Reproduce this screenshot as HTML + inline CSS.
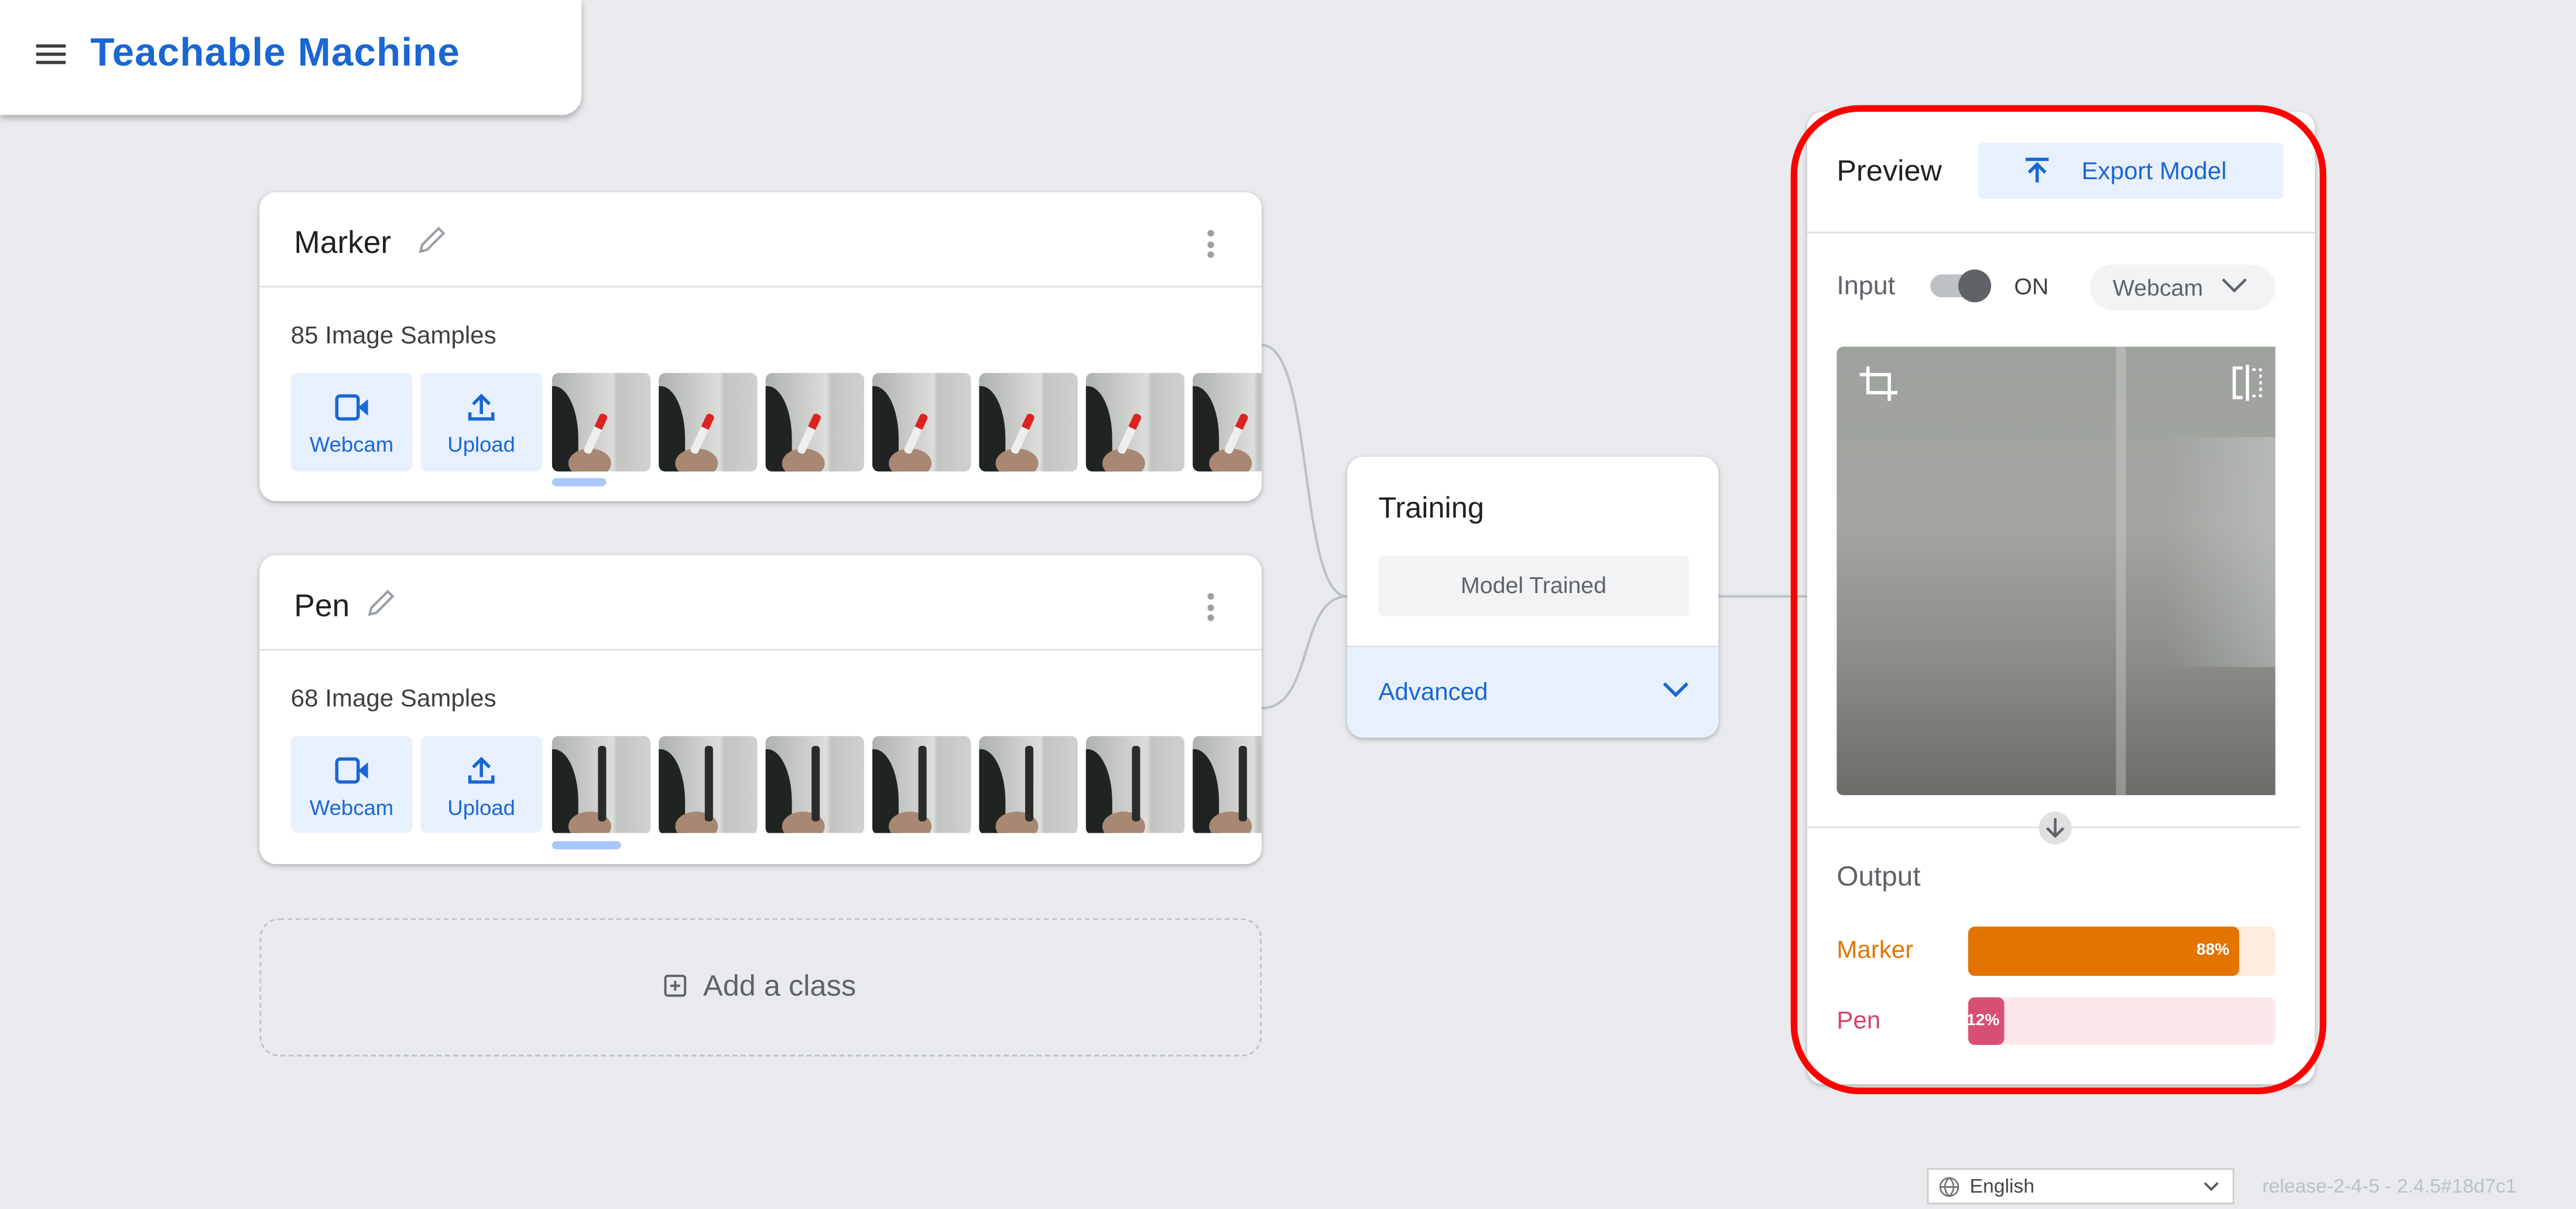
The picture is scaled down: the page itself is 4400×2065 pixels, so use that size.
<!DOCTYPE html>
<html><head><meta charset="utf-8"><style>
html,body{margin:0;padding:0;width:4400px;height:2065px;overflow:hidden;background:#e8eaed}
#s{position:absolute;left:0;top:0;width:1568px;height:736px;transform:scale(2.80612);transform-origin:0 0;font-family:"Liberation Sans",sans-serif;color:#202124}
.a{position:absolute}
.card{position:absolute;background:#fff;border-radius:10px;box-shadow:0 1px 3px rgba(0,0,0,.25)}
.btn{position:absolute;background:#e8f0fe;border-radius:4px;color:#1967d2;font-size:13px;text-align:center}
.th{position:absolute;width:60px;height:60px;border-radius:4px;overflow:hidden;background:linear-gradient(90deg,#aeb2ae,#cfd1ce 45%,#dcdedb 62%,#c2c5c2 66%,#cfd1cf)}
.th .b{position:absolute;left:-14px;top:8px;width:30px;height:64px;border-radius:50% 50% 0 0;background:#1f2322}
.th .h{position:absolute;left:10px;top:46px;width:26px;height:18px;border-radius:50%;background:#a88872}
.th .m{position:absolute;left:24px;top:24px;width:5px;height:26px;background:linear-gradient(#d22 35%,#eee 36%);transform:rotate(25deg);border-radius:2px}
.th .p{position:absolute;left:28px;top:6px;width:5px;height:46px;background:#2a2c2c;border-radius:2px}
.ind{position:absolute;height:5px;border-radius:3px;background:#a8c7fa}
.dots{position:absolute;width:4px}
.dots i{display:block;width:4px;height:4px;border-radius:2px;background:#9aa0a6;margin-bottom:2.5px}
</style></head><body><div id="s">

<div class="a" style="left:0;top:0;width:354px;height:70px;background:#fff;border-radius:0 0 12px 0;box-shadow:0 2px 4px rgba(0,0,0,.25)"></div>
<div class="a" style="left:22px;top:27px;width:18px;height:2px;background:#3c4043;box-shadow:0 5px 0 #3c4043,0 10px 0 #3c4043"></div>
<div class="a" style="left:55px;top:19px;font-size:24px;font-weight:bold;color:#1967d2;letter-spacing:0.4px">Teachable Machine</div>

<svg class="a" style="left:0;top:0" width="1568" height="736"><g fill="none" stroke="#bdc1c6" stroke-width="1.5">
<path d="M768 210 C800 210,790 363,820 363"/><path d="M768 431 C800 431,790 363,820 363"/><path d="M1046 363 L1100 363"/></g></svg>

<!-- Marker -->
<div class="card" style="left:158px;top:117px;width:610px;height:188px"></div>
<div class="a" style="left:158px;top:174px;width:610px;height:1px;background:#e0e0e0"></div>
<div class="a" style="left:179px;top:138px;font-size:19px">Marker</div>
<svg class="a" style="left:253px;top:136px" width="20" height="20"><path d="M3 17 L4 13 L14 3 L17 6 L7 16 Z" fill="none" stroke="#9aa0a6" stroke-width="1.5"/></svg>
<div class="dots" style="left:735px;top:140px"><i></i><i></i><i></i></div>
<div class="a" style="left:177px;top:196px;font-size:15px;color:#3c4043">85 Image Samples</div>
<div class="btn" style="left:177px;top:227px;width:74px;height:60px"><svg style="margin-top:12px" width="22" height="18"><rect x="2" y="2" width="13" height="14" rx="2" fill="none" stroke="#1967d2" stroke-width="2"/><path d="M15 9 L21 4 L21 14 Z" fill="#1967d2"/></svg><div style="margin-top:3px">Webcam</div></div>
<div class="btn" style="left:256px;top:227px;width:74px;height:60px"><svg style="margin-top:12px" width="20" height="18"><path d="M10 13 V2 M5 7 L10 2 L15 7 M3 12 V16 H17 V12" fill="none" stroke="#1967d2" stroke-width="2"/></svg><div style="margin-top:3px">Upload</div></div>
<div class="a" style="left:336px;top:227px;width:432px;height:60px;overflow:hidden">
<div class="th" style="left:0"><div class="b"></div><div class="h"></div><div class="m"></div></div>
<div class="th" style="left:65px"><div class="b"></div><div class="h"></div><div class="m"></div></div>
<div class="th" style="left:130px"><div class="b"></div><div class="h"></div><div class="m"></div></div>
<div class="th" style="left:195px"><div class="b"></div><div class="h"></div><div class="m"></div></div>
<div class="th" style="left:260px"><div class="b"></div><div class="h"></div><div class="m"></div></div>
<div class="th" style="left:325px"><div class="b"></div><div class="h"></div><div class="m"></div></div>
<div class="th" style="left:390px"><div class="b"></div><div class="h"></div><div class="m"></div></div>
</div>
<div class="ind" style="left:336px;top:291px;width:33px"></div>

<!-- Pen -->
<div class="card" style="left:158px;top:338px;width:610px;height:188px"></div>
<div class="a" style="left:158px;top:395px;width:610px;height:1px;background:#e0e0e0"></div>
<div class="a" style="left:179px;top:359px;font-size:19px">Pen</div>
<svg class="a" style="left:222px;top:357px" width="20" height="20"><path d="M3 17 L4 13 L14 3 L17 6 L7 16 Z" fill="none" stroke="#9aa0a6" stroke-width="1.5"/></svg>
<div class="dots" style="left:735px;top:361px"><i></i><i></i><i></i></div>
<div class="a" style="left:177px;top:417px;font-size:15px;color:#3c4043">68 Image Samples</div>
<div class="btn" style="left:177px;top:448px;width:74px;height:59px"><svg style="margin-top:12px" width="22" height="18"><rect x="2" y="2" width="13" height="14" rx="2" fill="none" stroke="#1967d2" stroke-width="2"/><path d="M15 9 L21 4 L21 14 Z" fill="#1967d2"/></svg><div style="margin-top:3px">Webcam</div></div>
<div class="btn" style="left:256px;top:448px;width:74px;height:59px"><svg style="margin-top:12px" width="20" height="18"><path d="M10 13 V2 M5 7 L10 2 L15 7 M3 12 V16 H17 V12" fill="none" stroke="#1967d2" stroke-width="2"/></svg><div style="margin-top:3px">Upload</div></div>
<div class="a" style="left:336px;top:448px;width:432px;height:59px;overflow:hidden">
<div class="th" style="left:0"><div class="b"></div><div class="h"></div><div class="p"></div></div>
<div class="th" style="left:65px"><div class="b"></div><div class="h"></div><div class="p"></div></div>
<div class="th" style="left:130px"><div class="b"></div><div class="h"></div><div class="p"></div></div>
<div class="th" style="left:195px"><div class="b"></div><div class="h"></div><div class="p"></div></div>
<div class="th" style="left:260px"><div class="b"></div><div class="h"></div><div class="p"></div></div>
<div class="th" style="left:325px"><div class="b"></div><div class="h"></div><div class="p"></div></div>
<div class="th" style="left:390px"><div class="b"></div><div class="h"></div><div class="p"></div></div>
</div>
<div class="ind" style="left:336px;top:512px;width:42px"></div>

<!-- Add class -->
<div class="a" style="left:158px;top:559px;width:608px;height:82px;border:1.5px dashed #bdc1c6;border-radius:12px"></div>
<svg class="a" style="left:404px;top:593px" width="14" height="14"><rect x="1" y="1" width="12" height="12" rx="1.5" fill="none" stroke="#5f6368" stroke-width="1.4"/><path d="M7 4 V10 M4 7 H10" stroke="#5f6368" stroke-width="1.4"/></svg>
<div class="a" style="left:428px;top:590px;font-size:18px;color:#5f6368">Add a class</div>

<!-- Training -->
<div class="card" style="left:820px;top:278px;width:226px;height:171px;overflow:hidden">
<div class="a" style="left:0;top:115px;width:226px;height:56px;background:#e8f0fe;border-top:1px solid #e0e0e0"></div></div>
<div class="a" style="left:839px;top:299px;font-size:18px">Training</div>
<div class="a" style="left:839px;top:338px;width:189px;height:37px;background:#f1f3f4;border-radius:3px;font-size:14px;color:#5f6368;text-align:center;line-height:37px">Model Trained</div>
<div class="a" style="left:839px;top:413px;font-size:15px;color:#1967d2">Advanced</div>
<svg class="a" style="left:1011px;top:414px" width="18" height="12"><path d="M2 2 L9 9 L16 2" fill="none" stroke="#1967d2" stroke-width="2"/></svg>

<!-- Preview -->
<div class="card" style="left:1100px;top:68px;width:309px;height:592px"></div>
<div class="a" style="left:1118px;top:94px;font-size:18px">Preview</div>
<div class="a" style="left:1204px;top:87px;width:186px;height:34px;background:#e8f0fe;border-radius:3px"></div>
<svg class="a" style="left:1232px;top:95px" width="16" height="18"><path d="M1 2 H15 M8 16 V5 M3 10 L8 5 L13 10" fill="none" stroke="#1967d2" stroke-width="2"/></svg>
<div class="a" style="left:1267px;top:96px;font-size:15px;color:#1967d2">Export Model</div>
<div class="a" style="left:1100px;top:141px;width:309px;height:1px;background:#e0e0e0"></div>
<div class="a" style="left:1118px;top:166px;font-size:16px;color:#5f6368">Input</div>
<div class="a" style="left:1175px;top:167px;width:34px;height:14px;border-radius:7px;background:#bdc1c6"></div>
<div class="a" style="left:1192px;top:164px;width:20px;height:20px;border-radius:10px;background:#5f6368"></div>
<div class="a" style="left:1226px;top:166px;font-size:14px;color:#3c4043">ON</div>
<div class="a" style="left:1272px;top:161px;width:113px;height:28px;border-radius:14px;background:#f1f3f4"></div>
<div class="a" style="left:1286px;top:167px;font-size:14px;color:#5f6368">Webcam</div>
<svg class="a" style="left:1352px;top:169px" width="16" height="10"><path d="M1 1 L8 8 L15 1" fill="none" stroke="#5f6368" stroke-width="1.6"/></svg>
<div class="a" style="left:1118px;top:211px;width:267px;height:273px;border-radius:4px 0 0 4px;background:linear-gradient(180deg,#9ea29d 0%,#a3a5a1 40%,#8e918c 65%,#6b6e68 100%)">
<div class="a" style="left:170px;top:0;width:6px;height:273px;background:rgba(220,222,218,.35)"></div>
<div class="a" style="left:200px;top:55px;width:67px;height:140px;background:linear-gradient(90deg,rgba(255,255,255,0),rgba(220,225,225,.35))"></div>
</div>
<svg class="a" style="left:1131px;top:222px" width="26" height="24"><path d="M6 1 V17 H24 M1 6 H19 V22" fill="none" stroke="#fff" stroke-width="2"/></svg>
<svg class="a" style="left:1357px;top:222px" width="22" height="22"><path d="M8 2 H3 V20 H8" fill="none" stroke="#fff" stroke-width="2"/><path d="M11 0 V22" stroke="#fff" stroke-width="2"/><path d="M14 3 H19 V19 H14" fill="none" stroke="#fff" stroke-width="1.6" stroke-dasharray="2 2"/></svg>
<div class="a" style="left:1100px;top:503px;width:300px;height:1px;background:#e0e0e0"></div>
<div class="a" style="left:1241px;top:494px;width:20px;height:20px;border-radius:10px;background:#e0e0e0"></div>
<svg class="a" style="left:1244px;top:497px" width="14" height="14"><path d="M7 1 V12 M2 7 L7 12 L12 7" fill="none" stroke="#5f6368" stroke-width="1.6"/></svg>
<div class="a" style="left:1118px;top:524px;font-size:17px;color:#5f6368">Output</div>
<div class="a" style="left:1118px;top:570px;font-size:15px;color:#e37400">Marker</div>
<div class="a" style="left:1198px;top:564px;width:187px;height:30px;border-radius:4px;background:#fdebdf"></div>
<div class="a" style="left:1198px;top:564px;width:165px;height:30px;border-radius:4px;background:#e37400;color:#fff;font-size:10px;font-weight:bold;text-align:right;line-height:30px;box-sizing:border-box;padding-right:6px">88%</div>
<div class="a" style="left:1118px;top:613px;font-size:15px;color:#d7406b">Pen</div>
<div class="a" style="left:1198px;top:607px;width:187px;height:29px;border-radius:4px;background:#fde7ea"></div>
<div class="a" style="left:1198px;top:607px;width:22px;height:29px;border-radius:4px;background:#d94f73;color:#fff;font-size:10px;font-weight:bold;line-height:29px;overflow:hidden;text-indent:-1px">12%</div>

<div class="a" style="left:1090px;top:64px;width:318px;height:594px;border:4px solid #f00;border-radius:42px"></div>

<!-- footer -->
<div class="a" style="left:1173px;top:711px;width:187px;height:22px;background:#fff;border:1px solid #ccc;box-sizing:border-box"></div>
<svg class="a" style="left:1180px;top:716px" width="13" height="13"><circle cx="6.5" cy="6.5" r="5.5" fill="none" stroke="#777" stroke-width="1"/><path d="M1 6.5 H12 M6.5 1 C3 4,3 9,6.5 12 C10 9,10 4,6.5 1" fill="none" stroke="#777" stroke-width="1"/></svg>
<div class="a" style="left:1199px;top:715px;font-size:12px;color:#444">English</div>
<svg class="a" style="left:1341px;top:719px" width="10" height="7"><path d="M1 1 L5 5 L9 1" fill="none" stroke="#555" stroke-width="1.3"/></svg>
<div class="a" style="left:1377px;top:715px;font-size:12px;color:#bdc1c6">release-2-4-5 - 2.4.5#18d7c1</div>
</div></body></html>
